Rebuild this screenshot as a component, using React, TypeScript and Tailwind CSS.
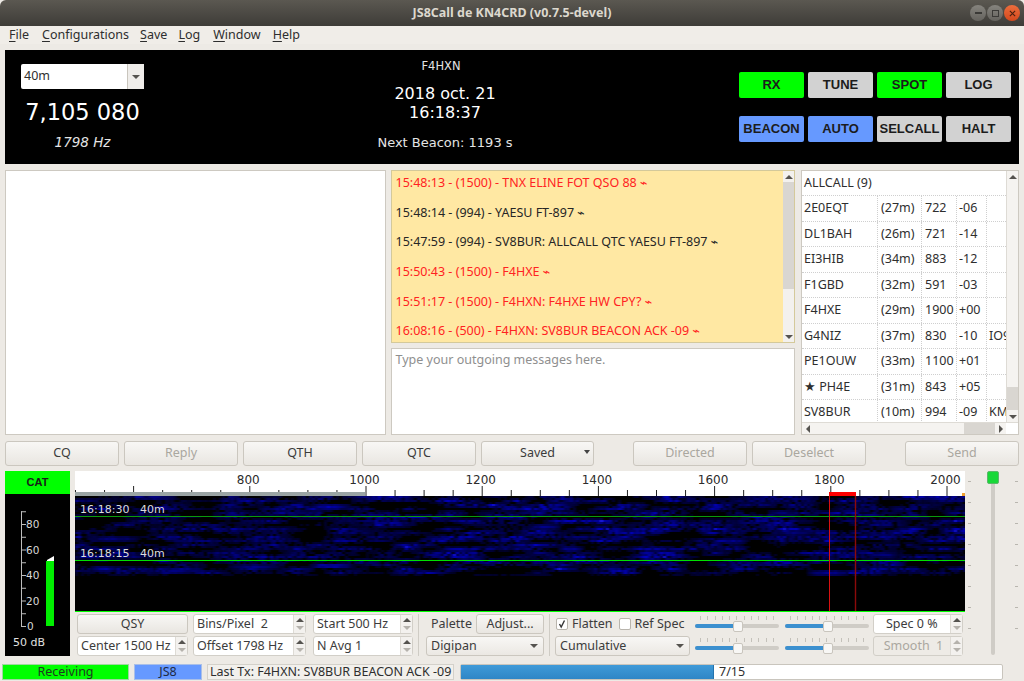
import React from 'react'

const font = { fontFamily: '"Noto Sans", sans-serif' }
const dejavu = { fontFamily: '"DejaVu Sans", sans-serif' }

const menus = [
  { label: 'File', ml: 'ml-[9px]' },
  { label: 'Configurations', ml: 'ml-[13px]' },
  { label: 'Save', ml: 'ml-[11px]' },
  { label: 'Log', ml: 'ml-[11px]' },
  { label: 'Window', ml: 'ml-[13px]' },
  { label: 'Help', ml: 'ml-[12px]' },
]

const rxLines = [
  { text: '15:48:13 - (1500) - TNX ELINE FOT QSO 88', red: true },
  { text: '15:48:14 - (994) - YAESU FT-897', red: false },
  { text: '15:47:59 - (994) - SV8BUR: ALLCALL QTC YAESU FT-897', red: false },
  { text: '15:50:43 - (1500) - F4HXE', red: true },
  { text: '15:51:17 - (1500) - F4HXN: F4HXE HW CPY?', red: true },
  { text: '16:08:16 - (500) - F4HXN: SV8BUR BEACON ACK -09', red: true },
]

const calls = [
  ['2E0EQT', '(27m)', '722', '-06', ''],
  ['DL1BAH', '(26m)', '721', '-14', ''],
  ['EI3HIB', '(34m)', '883', '-12', ''],
  ['F1GBD', '(32m)', '591', '-03', ''],
  ['F4HXE', '(29m)', '1900', '+00', ''],
  ['G4NIZ', '(37m)', '830', '-10', 'IO91'],
  ['PE1OUW', '(33m)', '1100', '+01', ''],
  ['★ PH4E', '(31m)', '843', '+05', ''],
  ['SV8BUR', '(10m)', '994', '-09', 'KM18'],
]

// little tiny triangle used on every scrollbar and spin box
const Tri = ({ dir, dim }: { dir: 'up' | 'down' | 'left' | 'right'; dim?: boolean }) => {
  const pts = {
    up: '0,5 4,1 8,5',
    down: '0,1 8,1 4,5',
    left: '5,0 5,8 1,4',
    right: '1,0 1,8 5,4',
  }[dir]
  const size = dir === 'up' || dir === 'down' ? 'w-[8px] h-[6px]' : 'w-[6px] h-[8px]'
  const box = dir === 'up' || dir === 'down' ? '0 0 8 6' : '0 0 6 8'
  return (
    <svg viewBox={box} className={size}>
      <polygon points={pts} fill={dim ? '#b5b2ac' : '#55534f'} />
    </svg>
  )
}

const Btn = ({ label, w, disabled }: { label: string; w: string; disabled?: boolean }) => (
  <div
    className={`${w} shrink-0 h-full flex items-center justify-center rounded-[3px] border border-[#cbc7bf] bg-gradient-to-b from-[#f8f7f5] to-[#e9e6e1] text-[12.5px] ${
      disabled ? 'text-[#aaa79f]' : 'text-[#3c3c3c]'
    }`}
  >
    {label}
  </div>
)

const HeaderBtn = ({ label, color }: { label: string; color: string }) => (
  <div
    className={`w-[65px] h-[26px] flex items-center justify-center rounded-[2px] text-[13px] font-bold text-[#1c1c1c] ${color}`}
    style={{ fontFamily: '"Liberation Sans", sans-serif' }}
  >
    {label}
  </div>
)

const Spin = ({ label, w, pad, disabled }: { label: string; w: string; pad?: string; disabled?: boolean }) => (
  <div className={`${w} h-[20px] flex items-stretch rounded-[3px] border border-[#d2cfc8] ${disabled ? 'bg-[#eeebe6]' : 'bg-white'}`}>
    <div className={`flex-1 flex items-center whitespace-pre text-[12.5px] ${pad ?? 'pl-[3px]'} ${disabled ? 'text-[#aaa79f] justify-center' : 'text-[#3c3c3c]'}`}>
      {label}
    </div>
    <div className="w-[12px] flex flex-col items-center justify-center gap-[2px] border-l border-[#dedbd5] bg-[#f3f1ee]">
      <Tri dir="up" dim={disabled} />
      <Tri dir="down" dim />
    </div>
  </div>
)

const Combo = ({ label, w }: { label: string; w: string }) => (
  <div className={`${w} h-[20px] flex items-center justify-between rounded-[3px] border border-[#cbc7bf] bg-gradient-to-b from-[#f8f7f5] to-[#ebe8e3] pl-[4px] pr-[5px] text-[12.5px] text-[#3c3c3c]`}>
    <span>{label}</span>
    <Tri dir="down" />
  </div>
)

const Check = ({ checked }: { checked?: boolean }) => (
  <div className="w-[12px] h-[12px] flex items-center justify-center rounded-[2px] border border-[#b9b5ad] bg-white">
    {checked && (
      <svg viewBox="0 0 10 10" className="w-[10px] h-[10px]">
        <path d="M2.5 5 L4.2 8 L7.5 1.5" fill="none" stroke="#333" strokeWidth="1.4" />
      </svg>
    )}
  </div>
)

const Slider = () => (
  <div className="w-[84px] h-[20px] relative">
    <div className="absolute left-[5px] right-[5px] top-[2px] flex justify-between">
      {Array.from({ length: 11 }).map((_, i) => (
        <div key={i} className="w-px h-[4px] bg-[#c4c1ba]" />
      ))}
    </div>
    <div className="absolute left-0 right-0 top-[10px] h-[4px] rounded-full bg-[#cfccc6]" />
    <div className="absolute left-0 w-[42px] top-[10px] h-[4px] rounded-l-full bg-[#3c90cf]" />
    <div className="absolute left-[38px] top-[7px] w-[10px] h-[11px] rounded-[2px] border border-[#c9c5bd] bg-[#f8f7f5]" />
  </div>
)

// waterfall picture, seeded so every run paints the same noise
const makeWaterfall = () => {
  let seed = 1234
  const rnd = () => {
    seed = (seed * 16807) % 2147483647
    return seed / 2147483647
  }
  const cols = 50
  const rows = 30
  const raw: number[][] = []
  for (let r = 0; r < rows; r++) {
    raw.push(Array.from({ length: cols }, () => rnd()))
  }
  // bilinear lookup, wide cells so the noise runs in horizontal smears
  const field = (x: number, y: number) => {
    const fx = x / 22
    const fy = y / 4
    const ix = Math.floor(fx)
    const iy = Math.floor(fy)
    const tx = fx - ix
    const ty = fy - iy
    const a = raw[iy][ix] * (1 - tx) + raw[iy][ix + 1] * tx
    const b = raw[iy + 1][ix] * (1 - tx) + raw[iy + 1][ix + 1] * tx
    return a * (1 - ty) + b * ty
  }
  const rects: { x: number; y: number; w: number; h: number; c: string }[] = []
  const streaks = [
    { x: 62, y: 1, w: 40, v: 0.6 },
    { x: 232, y: 10, w: 44, v: 0.8 },
    { x: 10, y: 42, w: 55, v: 0.5 },
    { x: 232, y: 69, w: 46, v: 0.95 },
    { x: 12, y: 72, w: 30, v: 0.7 },
    { x: 85, y: 74, w: 34, v: 0.65 },
    { x: 150, y: 70, w: 56, v: 0.6 },
    { x: 450, y: 30, w: 36, v: 0.6 },
    { x: 480, y: 52, w: 28, v: 0.65 },
    { x: 640, y: 44, w: 32, v: 0.6 },
    { x: 700, y: 36, w: 38, v: 0.55 },
    { x: 790, y: 58, w: 34, v: 0.55 },
    { x: 690, y: 16, w: 30, v: 0.5 },
    { x: 730, y: 76, w: 44, v: 0.65 },
  ]
  for (let y = 0; y < 80; y += 2) {
    for (let x = 0; x < 890; x += 3) {
      const side = x < 300 ? 0.8 : 1
      const c = Math.max(0, field(x, y) - 0.25) * 1.3
      let v = c * side * (rnd() < 0.2 ? 0.1 : 0.35 + rnd() * 0.65)
      if (y % 8 === 6) v *= 0.6
      if (y > 76) v *= 0.55
      for (const s of streaks) {
        const d = Math.abs(x - (s.x + s.w / 2)) / (s.w / 2)
        const dy = Math.abs(y - s.y)
        if (d < 1 && dy < 3) v = Math.max(v, s.v * (1 - d * d) * (1 - dy * 0.2) * (0.65 + rnd() * 0.35))
      }
      if (v > 0.04) {
        const b = Math.round(25 + v * 210)
        const g = v > 0.8 ? Math.round((v - 0.8) * 200) : 0
        rects.push({ x, y, w: 3, h: 2, c: `rgb(${g},${g},${b})` })
      }
    }
  }
  return rects
}

const waterfall = makeWaterfall()
const hz = (f: number) => (f - 500) * 0.581

const Ruler = () => {
  const ticks: number[] = []
  for (let f = 500; f <= 2030; f += 50) ticks.push(f)
  return (
    <svg width="890" height="26" className="block">
      <rect width="890" height="26" fill="white" />
      {ticks.map((f) => (
        <line key={f} x1={hz(f) + 0.5} x2={hz(f) + 0.5} y1={f % 200 === 0 ? 15 : 19} y2={26} stroke="#222" />
      ))}
      <rect x="0" y="21" width="290" height="5" fill="#9aa4a4" />
      <rect x="754" y="21" width="27" height="5" fill="#ff0000" />
      <rect x="887" y="22" width="3" height="4" fill="#f0a030" />
      {[800, 1000, 1200, 1400, 1600, 1800, 2000].map((f) => (
        <text key={f} x={hz(f) - 1} y="13" textAnchor="middle" fontSize="12" fill="#2c2c2c" style={dejavu}>
          {f}
        </text>
      ))}
    </svg>
  )
}

const Waterfall = () => (
  <div className="relative h-[116px] bg-black border-b border-[#00ff00]">
    <svg width="890" height="115" className="block">
      <defs>
        <filter id="soft">
          <feGaussianBlur stdDeviation="0.8 0.4" />
        </filter>
      </defs>
      <g filter="url(#soft)">
        {waterfall.map((r, i) => (
          <rect key={i} x={r.x} y={r.y} width={r.w} height={r.h} fill={r.c} />
        ))}
      </g>
      <line x1="0" x2="890" y1="20.5" y2="20.5" stroke="#0b9a0b" />
      <line x1="0" x2="890" y1="64.5" y2="64.5" stroke="#00e000" />
      <line x1="754.5" x2="754.5" y1="0" y2="115" stroke="#d81010" />
      <line x1="780.5" x2="780.5" y1="0" y2="115" stroke="#8c0a0a" strokeWidth="1.4" />
    </svg>
    <span className="absolute left-[5px] top-[6px] text-[11px] leading-[15px] text-[#dcdcdc] whitespace-pre" style={dejavu}>16:18:30   40m</span>
    <span className="absolute left-[5px] top-[50px] text-[11px] leading-[15px] text-[#dcdcdc] whitespace-pre" style={dejavu}>16:18:15   40m</span>
  </div>
)

const Meter = () => {
  const ticks = [0, 10, 20, 30, 40, 50, 60, 70, 80, 90]
  const y = (v: number) => 132 - v * 1.275
  return (
    <svg width="65" height="162" className="block">
      <line x1="16.5" x2="16.5" y1={y(90)} y2={y(0)} stroke="#bdbdbd" />
      {ticks.map((t) => (
        <line key={t} x1="16" x2="21" y1={y(t) + 0.5} y2={y(t) + 0.5} stroke="#bdbdbd" />
      ))}
      {[80, 60, 40, 20, 0].map((t) => (
        <text key={t} x={t === 0 ? 22 : 21} y={y(t) + 4} fontSize="10.5" fill="#d8d8d8" style={dejavu}>
          {t}
        </text>
      ))}
      <rect x="41" y="67" width="8" height="65" fill="#00ee00" />
      <polygon points="42,66 49,62 49,67 42,67" fill="white" />
      <text x="8" y="152" fontSize="11" fill="#e0e0e0" style={dejavu}>
        50 dB
      </text>
    </svg>
  )
}

const SideDashes = () => (
  <div className="flex flex-col justify-between h-[163px] pt-[10px] pb-[5px]">
    {Array.from({ length: 8 }).map((_, i) => (
      <div key={i} className="w-[3px] h-px bg-[#b9b6af]" />
    ))}
  </div>
)

export default function App() {
  return (
    <div className="w-[1024px] h-[681px] overflow-hidden bg-[#edeae5] flex flex-col text-[#2e2e2e]" style={font}>
      {/* title bar */}
      <div className="h-[26px] rounded-t-[6px] bg-gradient-to-b from-[#5b5851] to-[#3e3c38] relative flex items-center justify-center">
        <span className="text-[12.5px] font-bold text-[#dcd8ce]">JS8Call de KN4CRD (v0.7.5-devel)</span>
        <div className="absolute right-[4px] top-[5px] flex gap-[1px]">
          {[0, 1].map((i) => (
            <div key={i} className="w-[16px] h-[16px] rounded-full flex items-center justify-center bg-gradient-to-b from-[#86847e] to-[#65635e]">
              {i === 0 ? <div className="w-[7px] h-[1.5px] bg-[#3b3a37]" /> : <div className="w-[7px] h-[7px] border border-[#3b3a37]" />}
            </div>
          ))}
          <div className="w-[16px] h-[16px] rounded-full flex items-center justify-center bg-gradient-to-b from-[#ec6d3c] to-[#d4481c]">
            <svg viewBox="0 0 8 8" className="w-[7px] h-[7px]">
              <path d="M1 1 L7 7 M7 1 L1 7" stroke="#4b2010" strokeWidth="1.3" />
            </svg>
          </div>
        </div>
      </div>

      {/* menu */}
      <div className="h-[18px] flex items-center text-[12.5px] bg-[#f0ede8] text-[#2e2e2e]">
        {menus.map((m) => (
          <span key={m.label} className={m.ml}>
            <span className="underline underline-offset-2">{m.label[0]}</span>
            {m.label.slice(1)}
          </span>
        ))}
      </div>

      {/* black header */}
      <div className="mt-[6px] mx-[5px] h-[114px] bg-black flex text-white">
        <div className="w-[181px] pl-[16px] pt-[14px] flex flex-col">
          <div className="w-[123px] h-[25px] flex items-stretch rounded-[2px] bg-white text-[12.5px] text-[#2e2e2e]">
            <span className="flex-1 flex items-center pl-[3px]">40m</span>
            <span className="w-[17px] flex items-center justify-center border-l border-[#c9c5bd] bg-[#efedea]">
              <Tri dir="down" />
            </span>
          </div>
          <div className="w-[123px] text-center text-[22.5px] leading-[28px] mt-[9px]" style={dejavu}>7,105 080</div>
          <div className="w-[123px] text-center text-[13.5px] leading-[18px] italic text-[#e4e4e4] mt-[7px]" style={dejavu}>1798 Hz</div>
        </div>
        <div className="w-[518px] flex flex-col items-center pt-[8px]" style={dejavu}>
          <div className="text-[11.5px] leading-[16px] mr-[8px] text-[#e4e4e4]">F4HXN</div>
          <div className="text-[16px] leading-[19px] mt-[10px]">2018 oct. 21</div>
          <div className="text-[16px] leading-[19px]">16:18:37</div>
          <div className="text-[13px] leading-[18px] mt-[12px] text-[#e4e4e4]">Next Beacon: 1193 s</div>
        </div>
        <div className="ml-[35px] pt-[22px] flex flex-col gap-[18px]">
          <div className="flex gap-[4px]">
            <HeaderBtn label="RX" color="bg-[#00ff00]" />
            <HeaderBtn label="TUNE" color="bg-[#d2d2d2]" />
            <HeaderBtn label="SPOT" color="bg-[#00ff00]" />
            <HeaderBtn label="LOG" color="bg-[#d2d2d2]" />
          </div>
          <div className="flex gap-[4px]">
            <HeaderBtn label="BEACON" color="bg-[#6699ff]" />
            <HeaderBtn label="AUTO" color="bg-[#6699ff]" />
            <HeaderBtn label="SELCALL" color="bg-[#d2d2d2]" />
            <HeaderBtn label="HALT" color="bg-[#d2d2d2]" />
          </div>
        </div>
      </div>

      {/* main panes */}
      <div className="mt-[6px] mx-[5px] h-[265px] flex">
        <div className="w-[381px] bg-white border border-[#cdc9c1]" />
        <div className="w-[405px] ml-[5px] flex flex-col">
          <div className="h-[173px] flex border border-[#d4c99a] bg-[#ffe8a3]">
            <div className="flex-1 flex flex-col pl-[4px] pt-[3px] overflow-hidden">
              {rxLines.map((l) => (
                <div key={l.text} className={`h-[29.7px] shrink-0 text-[12.5px] leading-[18px] whitespace-nowrap ${l.red ? 'text-[#ff2222]' : 'text-[#262626]'}`}>
                  {l.text} <span style={dejavu}>⌁</span>
                </div>
              ))}
            </div>
            <div className="w-[11px] flex flex-col bg-[#f3f1ee]">
              <div className="h-[11px] flex items-center justify-center"><Tri dir="up" /></div>
              <div className="h-[107px] bg-[#d9d6d1]" />
              <div className="flex-1" />
              <div className="h-[11px] flex items-center justify-center"><Tri dir="down" /></div>
            </div>
          </div>
          <div className="mt-[5px] flex-1 bg-white border border-[#cdc9c1] pl-[4px] pt-[2px] text-[12.5px] text-[#8f8f8f]">
            Type your outgoing messages here.
          </div>
        </div>
        <div className="w-[218px] ml-[6px] border border-[#cdc9c1] bg-white flex flex-col">
          <div className="flex-1 flex min-h-0">
            <div className="flex-1 overflow-hidden">
              <div className="h-[25px] flex items-center pl-[2px] pt-[1px] text-[12.5px] border-b border-dotted border-[#cfcfcf] whitespace-nowrap">ALLCALL (9)</div>
              {calls.map((r) => (
                <div key={r[0]} className="h-[25.5px] flex items-center text-[12.5px] border-b border-dotted border-[#cfcfcf] whitespace-nowrap">
                  <span className="w-[76px] pl-[2px] pt-[1px] h-full flex items-center border-r border-dotted border-[#cfcfcf]">{r[0]}</span>
                  <span className="w-[44px] pl-[3px] pt-[1px] h-full flex items-center border-r border-dotted border-[#cfcfcf]">{r[1]}</span>
                  <span className="w-[35px] pl-[3px] pt-[1px] h-full flex items-center border-r border-dotted border-[#cfcfcf]">{r[2]}</span>
                  <span className="w-[30px] pl-[2px] pt-[1px] h-full flex items-center border-r border-dotted border-[#cfcfcf]">{r[3]}</span>
                  <span className="w-[19px] pl-[2px] pt-[1px] overflow-hidden">{r[4]}</span>
                </div>
              ))}
            </div>
            <div className="w-[12px] flex flex-col bg-[#f5f3f0] border-l border-[#dedbd5]">
              <div className="h-[11px] flex items-center justify-center"><Tri dir="up" /></div>
              <div className="flex-1 flex flex-col justify-end">
                <div className="h-[23px] mb-[1px] bg-[#d9d6d1]" />
              </div>
              <div className="h-[11px] flex items-center justify-center"><Tri dir="down" /></div>
            </div>
          </div>
          <div className="h-[12px] flex border-t border-[#dedbd5]">
            <div className="flex-1 flex bg-[#f5f3f0] items-center">
              <div className="w-[11px] flex justify-center"><Tri dir="left" /></div>
              <div className="flex-1 flex justify-end h-full"><div className="w-[31px] h-full bg-[#d9d6d1]" /></div>
              <div className="w-[11px] flex justify-center"><Tri dir="right" /></div>
            </div>
            <div className="w-[12px] bg-white" />
          </div>
        </div>
      </div>

      {/* buttons */}
      <div className="mt-[6px] mx-[5px] h-[25px] flex gap-[5px]">
        <Btn label="CQ" w="w-[114px]" />
        <Btn label="Reply" w="w-[114px]" disabled />
        <Btn label="QTH" w="w-[114px]" />
        <Btn label="QTC" w="w-[114px]" />
        <div className="w-[113px] shrink-0 h-full flex items-center justify-center relative rounded-[3px] border border-[#cbc7bf] bg-gradient-to-b from-[#f8f7f5] to-[#e9e6e1] text-[12.5px] text-[#3c3c3c]">
          Saved
          <span className="absolute right-[3px] top-[8px] w-0 h-0 border-l-[3px] border-r-[3px] border-t-[4px] border-l-transparent border-r-transparent border-t-[#444]" />
        </div>
        <div className="w-[29px] shrink-0" />
        <Btn label="Directed" w="w-[114px]" disabled />
        <Btn label="Deselect" w="w-[114px]" disabled />
        <div className="w-[29px] shrink-0" />
        <Btn label="Send" w="w-[114px]" disabled />
      </div>

      {/* waterfall section */}
      <div className="mt-[5px] h-[185px] flex pl-[5px]">
        <div className="w-[65px] h-[185px] flex flex-col">
          <div className="h-[23px] bg-[#00ff00] flex items-center justify-center text-[11px] font-bold text-[#1a1a1a]" style={{ fontFamily: '"Liberation Sans", sans-serif' }}>CAT</div>
          <div className="h-[162px] bg-black"><Meter /></div>
        </div>
        <div className="ml-[5px] w-[890px] flex flex-col">
          <Ruler />
          <Waterfall />
          <div className="mt-[2px] flex pl-[2px]">
            <div className="flex flex-col gap-[2px]">
              <div className="w-[111px] h-[20px]"><Btn label="QSY" w="w-full" /></div>
              <Spin label="Center 1500 Hz" w="w-[111px]" />
            </div>
            <div className="ml-[5px] flex flex-col gap-[2px]">
              <Spin label="Bins/Pixel  2" w="w-[113px]" />
              <Spin label="Offset 1798 Hz" w="w-[113px]" />
            </div>
            <div className="ml-[7px] flex flex-col gap-[2px]">
              <Spin label="Start 500 Hz" w="w-[100px]" />
              <Spin label="N Avg 1" w="w-[100px]" />
            </div>
            <div className="ml-[5px] w-px h-[42px] bg-[#cfccc5]" />
            <div className="ml-[7px] flex flex-col gap-[2px] w-[118px]">
              <div className="flex h-[20px] items-center justify-between">
                <span className="ml-[5px] text-[12.5px] text-[#3c3c3c]">Palette</span>
                <div className="h-[20px]"><Btn label="Adjust..." w="w-[68px]" /></div>
              </div>
              <Combo label="Digipan" w="w-[118px]" />
            </div>
            <div className="ml-[5px] w-px h-[42px] bg-[#cfccc5]" />
            <div className="ml-[5px] flex flex-col gap-[2px] w-[135px]">
              <div className="h-[20px] flex items-center text-[12.5px] text-[#3c3c3c] pl-[1px]">
                <Check checked />
                <span className="ml-[4px]">Flatten</span>
                <span className="ml-[6px]"><Check /></span>
                <span className="ml-[4px] whitespace-nowrap">Ref Spec</span>
              </div>
              <Combo label="Cumulative" w="w-[135px]" />
            </div>
            <div className="ml-[5px] flex flex-col gap-[2px]">
              <div className="flex gap-[6px]"><Slider /><Slider /></div>
              <div className="flex gap-[6px]"><Slider /><Slider /></div>
            </div>
            <div className="ml-[4px] flex flex-col gap-[2px]">
              <Spin label="Spec 0 %" w="w-[90px]" pad="pl-[12px]" />
              <Spin label="Smooth  1" w="w-[90px]" disabled />
            </div>
          </div>
        </div>
        <div className="w-[59px] flex justify-between pl-[3px] pr-[6px]">
          <div><SideDashes /></div>
          <div className="relative w-[14px] flex justify-center">
            <div className="w-[4px] h-[184px] bg-[#cfccc6] rounded-full" />
            <div className="absolute top-0 left-[1px] w-[12px] h-[13px] rounded-[2px] bg-[#18d838] border border-[#5cb86a]" />
          </div>
          <div><SideDashes /></div>
        </div>
      </div>

      {/* status bar */}
      <div className="mt-[8px] h-[16px] flex text-[12.5px] leading-[16px] pl-[2px]">
        <div className="w-[127px] bg-[#00ff00] border border-[#9fd89f] flex items-center justify-center text-[#1f3a1f]">Receiving</div>
        <div className="ml-[5px] w-[68px] bg-[#6699ff] border border-[#a9bfe8] flex items-center justify-center text-[#1e2a44]">JS8</div>
        <div className="ml-[5px] w-[247px] bg-[#f2f0ec] border border-[#d4d1ca] flex items-center pl-[2px] whitespace-nowrap overflow-hidden">Last Tx: F4HXN: SV8BUR BEACON ACK -09</div>
        <div className="ml-[6px] w-[543px] bg-white border border-[#c9c5bd] rounded-[2px] flex items-center">
          <div className="w-[253px] h-full bg-gradient-to-b from-[#3f9ad8] to-[#2f86c6] border-r border-[#2473ad]" />
          <span className="ml-[5px]">7/15</span>
        </div>
      </div>
    </div>
  )
}
